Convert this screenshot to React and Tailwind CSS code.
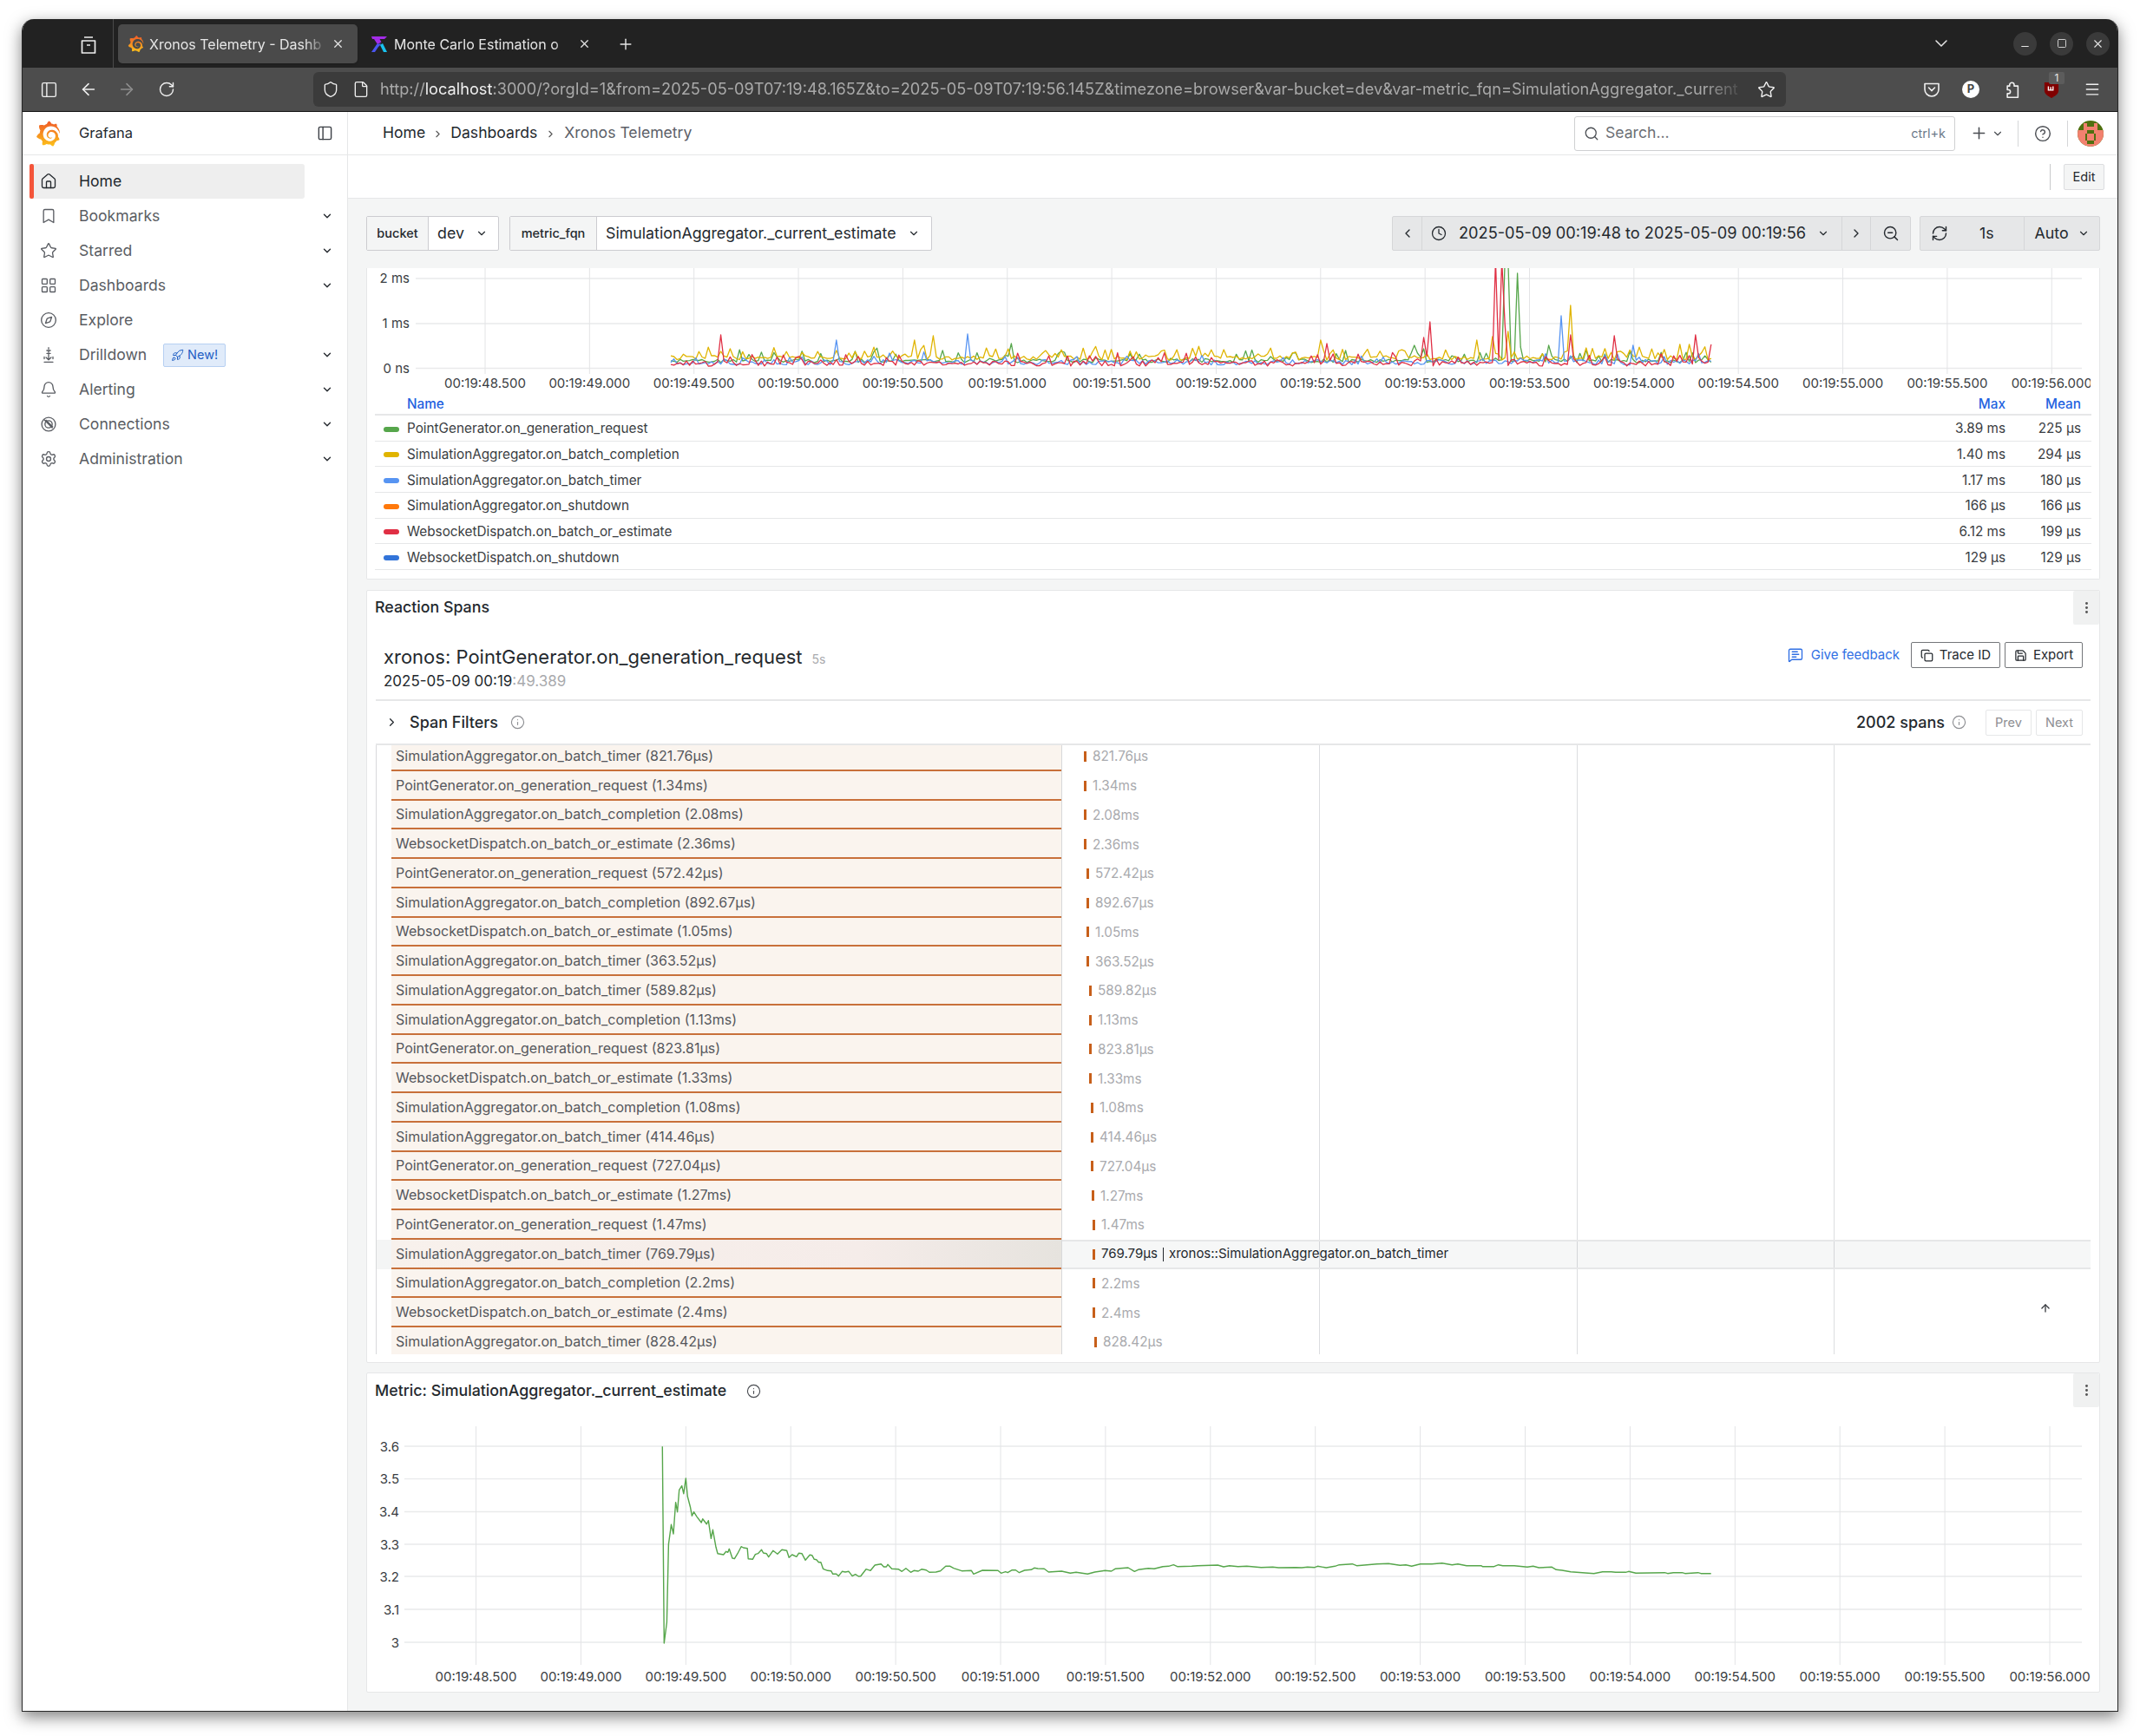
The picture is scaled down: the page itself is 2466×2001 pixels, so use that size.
import React from "react";
import { SiGrafana } from "react-icons/si";
import {
  ArrowLeft, ArrowRight, Bell, Bookmark, ChevronDown, ChevronLeft, ChevronRight, Clock, Compass,
  Copy, File, HelpCircle, Home, Info, LayoutGrid, Menu, MessageSquareText, MoreVertical, PanelLeft,
  Plus, RefreshCw, RotateCw, Rocket, Save, Search, Settings, Shield, Star, X, ZoomOut, ArrowUp,
  Minus, Square,
} from "lucide-react";

const inter = "font-['Inter',sans-serif]";

const navItems = [
  { name: "Bookmarks", icon: Bookmark, arrow: true },
  { name: "Starred", icon: Star, arrow: true },
  { name: "Dashboards", icon: LayoutGrid, arrow: true },
  { name: "Explore", icon: Compass },
  { name: "Drilldown", icon: DrillIcon, arrow: true, badge: true },
  { name: "Alerting", icon: Bell, arrow: true },
  { name: "Connections", icon: LinkIcon, arrow: true },
  { name: "Administration", icon: Settings, arrow: true },
];

const legend = [
  { name: "PointGenerator.on_generation_request", color: "bg-[#56a64b]", max: "3.89 ms", mean: "225 µs" },
  { name: "SimulationAggregator.on_batch_completion", color: "bg-[#e0b400]", max: "1.40 ms", mean: "294 µs" },
  { name: "SimulationAggregator.on_batch_timer", color: "bg-[#5794f2]", max: "1.17 ms", mean: "180 µs" },
  { name: "SimulationAggregator.on_shutdown", color: "bg-[#ff780a]", max: "166 µs", mean: "166 µs" },
  { name: "WebsocketDispatch.on_batch_or_estimate", color: "bg-[#e02f44]", max: "6.12 ms", mean: "199 µs" },
  { name: "WebsocketDispatch.on_shutdown", color: "bg-[#3274d9]", max: "129 µs", mean: "129 µs" },
];

const spans = [
  ["SimulationAggregator.on_batch_timer", "821.76µs", 25],
  ["PointGenerator.on_generation_request", "1.34ms", 25],
  ["SimulationAggregator.on_batch_completion", "2.08ms", 25],
  ["WebsocketDispatch.on_batch_or_estimate", "2.36ms", 25],
  ["PointGenerator.on_generation_request", "572.42µs", 28],
  ["SimulationAggregator.on_batch_completion", "892.67µs", 28],
  ["WebsocketDispatch.on_batch_or_estimate", "1.05ms", 28],
  ["SimulationAggregator.on_batch_timer", "363.52µs", 28],
  ["SimulationAggregator.on_batch_timer", "589.82µs", 31],
  ["SimulationAggregator.on_batch_completion", "1.13ms", 31],
  ["PointGenerator.on_generation_request", "823.81µs", 31],
  ["WebsocketDispatch.on_batch_or_estimate", "1.33ms", 31],
  ["SimulationAggregator.on_batch_completion", "1.08ms", 33],
  ["SimulationAggregator.on_batch_timer", "414.46µs", 33],
  ["PointGenerator.on_generation_request", "727.04µs", 33],
  ["WebsocketDispatch.on_batch_or_estimate", "1.27ms", 34],
  ["PointGenerator.on_generation_request", "1.47ms", 35],
  ["SimulationAggregator.on_batch_timer", "769.79µs", 35],
  ["SimulationAggregator.on_batch_completion", "2.2ms", 35],
  ["WebsocketDispatch.on_batch_or_estimate", "2.4ms", 35],
  ["SimulationAggregator.on_batch_timer", "828.42µs", 37],
];

const timeLabels = ["48.500", "49.000", "49.500", "50.000", "50.500", "51.000", "51.500", "52.000", "52.500", "53.000", "53.500", "54.000", "54.500", "55.000", "55.500", "56.000"];

// green metric line, traced from the screenshot
const curveA = [[712,82],[716,762],[722,690],[726,420],[732,352],[737,384],[742,275],[746,308],[750,232],[756,218],[760,245],[765,192],[769,255],[775,290],[779,322],[783,308],[790,325],[800,345],[803,332],[812,350],[816,338],[822,400],[826,370],[833,430],[837,452],[850,456],[856,445],[860,448],[863,436],[870,468],[875,470],[882,452],[890,428],[895,432],[904,434],[906,470],[916,472],[922,455],[928,452],[936,439],[940,450],[947,452],[952,464],[962,442],[972,454],[982,439],[993,442],[998,466],[1005,456],[1015,463],[1020,451],[1027,452],[1035,475],[1045,457],[1050,458],[1055,472],[1060,473],[1065,482],[1070,482],[1075,505],[1085,511],[1093,512],[1097,523],[1105,523],[1110,530],[1118,514],[1125,516],[1133,514],[1141,530],[1148,524],[1155,531],[1160,530],[1172,506],[1182,511],[1192,492],[1206,488],[1212,498],[1218,498],[1221,490],[1230,505],[1245,506],[1253,514],[1262,503],[1273,517],[1280,511],[1290,513],[1298,506],[1308,509],[1315,517],[1330,516],[1340,512],[1352,496],[1362,496],[1370,503],[1388,512],[1410,511],[1415,523],[1435,510],[1470,511],[1477,520],[1487,515],[1492,518],[1502,509],[1510,509],[1518,518],[1530,510],[1545,508],[1552,502],[1560,504]];
const curveB = [[40,55],[55,66],[100,63],[130,70],[150,67],[190,73],[215,66],[250,61],[272,63],[285,55],[330,51],[352,64],[365,58],[400,53],[420,55],[450,47],[470,46],[487,41],[500,47],[550,46],[570,44],[640,42],[660,48],[680,44],[710,47],[740,46],[790,50],[830,49],[850,51],[910,50],[930,51],[950,49],[975,50],[985,46],[1015,51],[1045,46],[1060,41],[1105,38],[1120,44],[1190,38],[1230,37],[1270,43],[1290,41],[1310,46],[1340,38],[1380,38],[1415,35],[1450,41],[1470,38]];
const curveC = [[0,38],[30,44],[80,44],[85,47],[125,47],[140,41],[155,44],[195,44],[240,49],[260,46],[280,51],[325,49],[340,58],[360,60],[390,65],[410,67],[470,71],[500,65],[530,65],[545,67],[580,67],[590,64],[615,70],[715,68],[725,71],[745,68],[775,68],[785,71],[830,68],[840,71],[875,71]];

const metricPath = [
  ...curveA.map(([x, y]) => [400 + x / 1.96, 1640 + y / 3]),
  ...curveB.map(([x, y]) => [1190 + x / 3, 1790 + y / 3]),
  ...curveC.map(([x, y]) => [1680 + x / 3, 1790 + y / 3]),
].map(([x, y]) => `${x.toFixed(1)},${y.toFixed(1)}`).join(" ");

function rng(seed) {
  let a = seed;
  return () => {
    a = (a + 0x6d2b79f5) | 0;
    let t = Math.imul(a ^ (a >>> 15), 1 | a);
    t = (t + Math.imul(t ^ (t >>> 7), 61 | t)) ^ t;
    return ((t ^ (t >>> 14)) >>> 0) / 4294967296;
  };
}

function series(seed, base, noise, spikeRate, spikeSize, peaks) {
  const r = rng(seed);
  const pts = [];
  for (let x = 773; x <= 1973; x += 3.6) {
    let y = base + (r() - 0.5) * noise;
    if (r() < spikeRate) y -= r() * spikeSize;
    pts.push([x, y]);
  }
  peaks.forEach(([px, py]) => {
    const i = Math.round((px - 773) / 3.6);
    pts[i] = [pts[i][0], py];
  });
  return pts.map(([x, y]) => `${x.toFixed(1)},${y.toFixed(1)}`).join(" ");
}

const traces = [
  { color: "#56a64b", pts: series(11, 416, 4, 0.22, 13, [[1733, 300], [1736, 300], [1750, 315], [1753, 400], [1166, 396], [1784, 398], [1630, 398], [1850, 408]]) },
  { color: "#e0b400", pts: series(22, 412.5, 5, 0.34, 13, [[1074, 387], [1052, 392], [1810, 352], [1718, 388], [1739, 382], [1937, 397], [1945, 397], [1523, 392], [1700, 392]]) },
  { color: "#5794f2", pts: series(33, 417.5, 6, 0.14, 10, [[1114, 385], [1798, 364], [1882, 398], [965, 392]]) },
  { color: "#e02f44", pts: series(44, 419, 6, 0.22, 11, [[832, 386], [1722, 300], [1729, 300], [1735, 374], [1646, 371], [1641, 389], [1810, 386], [1860, 387], [1954, 386], [1973, 397], [1529, 396]]) },
];

function DrillIcon(props) {
  return (
    <svg viewBox="0 0 24 24" fill="none" stroke="currentColor" strokeWidth="1.6" strokeLinecap="round" {...props}>
      <path d="M12 2v2M12 6.5v2M9.5 6h5M9.5 10h5M12 11v8M12 19l-3.5-3.5M12 19l3.5-3.5M6 15v2.5M18 15v2.5M6 22h12" />
    </svg>
  );
}

function LinkIcon(props) {
  return (
    <svg viewBox="0 0 24 24" fill="none" stroke="currentColor" strokeWidth="1.6" {...props}>
      <circle cx="12" cy="12" r="9.5" />
      <circle cx="12" cy="12" r="5" />
      <path d="M5.5 5.5 17.5 17.5M8 6l10 10" />
    </svg>
  );
}

function GrafanaLogo({ className }) {
  return <SiGrafana className={className} fill="url(#grafana-grad)" />;
}

function XronosLogo() {
  return (
    <svg viewBox="0 0 20 20" className="w-[20px] h-[20px] shrink-0">
      <path d="M1 1h18l-3 3H10.5l2 3.5L8 10 4 4H2z" fill="#a32ce8" />
      <path d="M7.5 9.5h5L9 13l-4 6H1z" fill="#4a55f0" />
      <path d="M11 11l3-2 5 10h-4z" fill="#18c3f0" />
    </svg>
  );
}

function Avatar() {
  const cells = [[1,0],[4,0],[1,1],[2,1],[3,1],[4,1],[1,2],[4,2],[2,3],[3,3],[0,4],[2,4],[3,4],[5,4],[0,5],[1,5],[4,5],[5,5],[2,6],[3,6],[1,6],[4,6]];
  return (
    <svg viewBox="0 0 30 30" className="w-[30px] h-[30px] rounded-full bg-[#4f6f0f] shrink-0">
      <rect x="0" y="11" width="30" height="12" fill="#f2816f" />
      <rect x="9" y="11" width="12" height="12" fill="#4f6f0f" />
      {cells.map(([c, r]) => (
        <rect key={`${c}-${r}`} x={3 + c * 4} y={3 + r * 4} width="4" height="4" fill="#f2816f" />
      ))}
    </svg>
  );
}

function BrowserChrome() {
  return (
    <div className="shrink-0">
      <div className="h-[56px] bg-[#222222] flex items-end pl-[105px] text-[#e6e6e6]">
        <div className="h-full w-[1px] bg-[#4a4a4a] -ml-px mr-[5px] self-stretch" />
        <div className="absolute left-[66px] top-[19px]">
          <svg viewBox="0 0 20 22" fill="none" stroke="#eee" strokeWidth="1.7" className="w-[20px] h-[22px]">
            <path d="M5 2h10M2.5 6h15v14h-15z" strokeLinejoin="round" />
            <path d="M8 11h4" />
          </svg>
        </div>
        <div className="w-[276px] h-[45px] bg-[#4a4a4a] rounded-[5px] flex items-center pl-[11px] pr-[15px] gap-[6px] mb-[5px] shadow-sm">
          <GrafanaLogo className="w-[19px] h-[19px] shrink-0" />
          <span className="flex-1 text-[16px] whitespace-nowrap [mask-image:linear-gradient(to_right,black_88%,transparent)]">Xronos Telemetry - Dashb</span>
          <X size={15} strokeWidth={2} className="shrink-0" />
        </div>
        <div className="w-[275px] h-[45px] mb-[5px] flex items-center pl-[15px] gap-[7px]">
          <XronosLogo />
          <span className="w-[205px] text-[16px] whitespace-nowrap [mask-image:linear-gradient(to_right,black_90%,transparent)]">Monte Carlo Estimation o</span>
          <X size={15} strokeWidth={2} className="shrink-0" />
        </div>
        <div className="h-[45px] mb-[5px] flex items-center ml-[24px]">
          <Plus size={20} strokeWidth={1.7} />
        </div>
        <div className="flex-1 h-full flex items-center justify-end pr-[9px] gap-[15px]">
          <ChevronDown size={24} strokeWidth={1.5} className="mr-[56px]" />
          <div className="w-[27px] h-[27px] rounded-full bg-[#3a3a3a] flex items-center justify-center"><Minus size={13} strokeWidth={2} className="mt-[6px]" /></div>
          <div className="w-[27px] h-[27px] rounded-full bg-[#3a3a3a] flex items-center justify-center"><Square size={12} strokeWidth={1.7} /></div>
          <div className="w-[27px] h-[27px] rounded-full bg-[#3a3a3a] flex items-center justify-center"><X size={15} strokeWidth={1.7} /></div>
        </div>
      </div>
      <div className="h-[51px] bg-[#4d4d4d] border-b border-[#111] flex items-center text-[#f0f0f0] pl-[20px]">
        <PanelLeft size={21} strokeWidth={1.6} className="shrink-0" />
        <ArrowLeft size={22} strokeWidth={1.7} className="ml-[24px] shrink-0" />
        <ArrowRight size={22} strokeWidth={1.7} className="ml-[22px] text-[#8e8e8e] shrink-0" />
        <RotateCw size={20} strokeWidth={1.7} className="ml-[25px] shrink-0" />
        <div className="ml-[159px] w-[1697px] shrink-0 h-[40px] bg-[#3b3b3b] rounded-[6px] flex items-center pl-[10px] pr-[12px]">
          <Shield size={20} strokeWidth={1.6} className="shrink-0" />
          <File size={20} strokeWidth={1.6} className="shrink-0 ml-[15px]" />
          <div className={`ml-[12px] flex-1 text-[18.2px] text-[#a9a9a9] whitespace-nowrap ${inter} [mask-image:linear-gradient(to_right,black_97%,transparent)]`}>
            http://<span className="text-[#f0f0f0]">localhost</span>:3000/?orgId=1&amp;from=2025-05-09T07:19:48.165Z&amp;to=2025-05-09T07:19:56.145Z&amp;timezone=browser&amp;var-bucket=dev&amp;var-metric_fqn=SimulationAggregator._current
          </div>
          <Star size={21} strokeWidth={1.6} className="shrink-0 ml-[14px]" />
        </div>
        <svg viewBox="0 0 20 20" fill="none" stroke="#f0f0f0" strokeWidth="1.6" className="w-[20px] h-[20px] ml-[158px] shrink-0">
          <path d="M2 3.5h16v6.5a8 8 0 0 1-16 0z" strokeLinejoin="round" />
          <path d="M6.5 8l3.5 3.5L13.5 8" strokeLinecap="round" />
        </svg>
        <div className="ml-[25px] w-[20px] h-[20px] rounded-full bg-white text-[#444] text-[13px] font-bold flex items-center justify-center shrink-0">P</div>
        <svg viewBox="0 0 24 24" fill="none" stroke="#f0f0f0" strokeWidth="1.8" strokeLinejoin="round" className="w-[21px] h-[21px] ml-[26px] shrink-0">
          <path d="M10 7V5.5a3 3 0 0 1 6 0V7h5v15H7v-5h1.5a2.5 2.5 0 0 0 0-5H7V7z" />
        </svg>
        <div className="relative ml-[27px] shrink-0">
          <svg viewBox="0 0 20 22" className="w-[18px] h-[22px] block">
            <path d="M1 2h18v11c0 4-5 7-9 9-4-2-9-5-9-9z" fill="#800000" />
            <path d="M6 7v5h3V8m0 4h3V7" stroke="#fff" strokeWidth="1.5" fill="none" />
          </svg>
          <div className="absolute -top-[9px] left-[6px] w-[18px] h-[14px] bg-[#5c5c5c] rounded-[2px] text-[12px] leading-[14px] text-center text-[#e6e6e6]">1</div>
        </div>
        <Menu size={20} strokeWidth={1.7} className="ml-[28px] shrink-0" />
      </div>
    </div>
  );
}

function Sidebar() {
  return (
    <aside className="w-[375px] shrink-0 border-r border-[#e6e7e8] bg-white flex flex-col">
      <div className="h-[50px] border-b border-[#e6e7e8] flex items-center pl-[15px] pr-[16px]">
        <GrafanaLogo className="w-[29px] h-[30px]" />
        <span className="ml-[21px] flex-1 text-[16.5px] text-[#24292e]">Grafana</span>
        <PanelLeft size={19} strokeWidth={1.8} className="text-[#3c4046]" />
      </div>
      <nav className="pt-[10px] text-[17.6px] text-[#5a5d63]">
        <div className="h-[40px] ml-[8px] w-[317px] flex items-center bg-[#eeeeee] rounded-[3px] relative text-[#24292e]">
          <div className="absolute left-0 top-0 bottom-0 w-[5px] rounded-[2px] bg-[#f4553a]" />
          <Home size={20} strokeWidth={1.6} className="ml-[12px]" />
          <span className="ml-[25px]">Home</span>
        </div>
        {navItems.map((item) => (
          <div key={item.name} className="h-[40px] ml-[8px] flex items-center pr-[16px]">
            <item.icon width={20} height={20} strokeWidth={1.6} className="ml-[12px] shrink-0" />
            <span className="ml-[25px]">{item.name}</span>
            {item.badge && (
              <span className="ml-[19px] h-[27px] w-[72px] rounded-[2px] bg-[#e0ebfa] border border-[#b6d0f2] text-[#1f5fc4] text-[14.5px] flex items-center justify-center gap-[4px]">
                <Rocket size={15} strokeWidth={1.6} />New!
              </span>
            )}
            {item.arrow && <ChevronDown size={14} strokeWidth={2.4} className="ml-auto text-[#24292e]" />}
          </div>
        ))}
      </nav>
    </aside>
  );
}

function TopBar() {
  return (
    <>
      <div className="h-[50px] shrink-0 border-b border-[#e6e7e8] bg-white flex items-center pl-[40px] pr-[16px] text-[17.6px]">
        <span className="text-[#24292e]">Home</span>
        <ChevronRight size={13} className="mx-[8px] text-[#555] mt-[2px]" />
        <span className="text-[#24292e]">Dashboards</span>
        <ChevronRight size={13} className="mx-[9px] text-[#555] mt-[2px]" />
        <span className="text-[#5c6068]">Xronos Telemetry</span>
        <div className="ml-auto w-[439px] h-[40px] border border-[#cfd0d2] rounded-[3px] flex items-center pl-[10px] pr-[10px]">
          <Search size={18} strokeWidth={1.7} className="text-[#4a4d52]" />
          <span className="ml-[7px] text-[#6c6f75]">Search...</span>
          <span className="ml-auto text-[14.5px] text-[#6c7a8a]">ctrl+k</span>
        </div>
        <Plus size={21} strokeWidth={1.8} className="ml-[17px] text-[#4a4d52]" />
        <ChevronDown size={14} strokeWidth={2} className="ml-[4px] text-[#4a4d52]" />
        <div className="w-px h-[30px] bg-[#d5d6d8] ml-[16px]" />
        <HelpCircle size={20} strokeWidth={1.7} className="ml-[18px] text-[#4a4d52]" />
        <div className="w-px h-[30px] bg-[#d5d6d8] ml-[18px]" />
        <div className="ml-[11px]"><Avatar /></div>
      </div>
      <div className="h-[50px] shrink-0 border-b border-[#e6e7e8] bg-white flex items-center justify-end pr-[15px]">
        <div className="w-px h-[30px] bg-[#c8c9cb] mr-[15px]" />
        <div className="h-[30px] w-[47px] bg-[#f4f5f5] border border-[#dcdde0] rounded-[2px] text-[14.5px] text-[#24292e] flex items-center justify-center">Edit</div>
      </div>
    </>
  );
}

function VarRow() {
  const seg = "h-[40px] bg-[#e6e7e8] border border-[#d5d6d8] flex items-center justify-center text-[#24292e]";
  return (
    <div className="h-[40px] flex items-center text-[17.8px] text-[#24292e]">
      <div className="h-[40px] w-[153px] flex border border-[#ccccd0] rounded-[2px] bg-white">
        <span className="w-[71px] bg-[#f4f5f5] border-r border-[#ccccd0] text-[14.5px] font-medium flex items-center justify-center">bucket</span>
        <span className="pl-[10px] leading-[38px]">dev</span>
        <ChevronDown size={14} strokeWidth={2} className="ml-[13px] mt-[12px]" />
      </div>
      <div className="ml-[12px] h-[40px] w-[487px] flex border border-[#ccccd0] rounded-[2px] bg-white">
        <span className="w-[100px] bg-[#f4f5f5] border-r border-[#ccccd0] text-[14.5px] font-medium flex items-center justify-center">metric_fqn</span>
        <span className="pl-[10px] leading-[38px]">SimulationAggregator._current_estimate</span>
        <ChevronDown size={14} strokeWidth={2} className="ml-[13px] mt-[12px]" />
      </div>
      <div className="ml-auto flex">
        <div className={`${seg} w-[35px] rounded-l-[2px]`}><ChevronLeft size={16} strokeWidth={2} /></div>
        <div className={`${seg} w-[485px] -ml-px justify-start pl-[10px]`}>
          <Clock size={18} strokeWidth={1.7} />
          <span className="ml-[14px] whitespace-nowrap text-[18.2px]">2025-05-09 00:19:48 to 2025-05-09 00:19:56</span>
          <ChevronDown size={14} strokeWidth={2} className="ml-auto mr-[14px]" />
        </div>
        <div className={`${seg} w-[34px] -ml-px`}><ChevronRight size={16} strokeWidth={2} /></div>
        <div className={`${seg} w-[47px] -ml-px rounded-r-[2px]`}><ZoomOut size={20} strokeWidth={1.7} /></div>
        <div className={`${seg} w-[121px] ml-[10px] rounded-l-[2px] justify-start pl-[12px]`}>
          <RefreshCw size={20} strokeWidth={1.7} />
          <span className="ml-[36px]">1s</span>
        </div>
        <div className={`${seg} w-[88px] -ml-px rounded-r-[2px]`}>
          Auto<ChevronDown size={14} strokeWidth={2} className="ml-[10px]" />
        </div>
      </div>
    </div>
  );
}

function Telemetry() {
  const grid = timeLabels.map((_, i) => 559 + i * 120.35);
  return (
    <section className="h-[359px] bg-white border-x border-b border-[#e6e7e8] rounded-b-[2px]">
      <svg viewBox="423 309 1996 147" className={`block w-[1996px] h-[147px] ${inter}`}>
        <defs>
          <clipPath id="top-clip"><rect x="423" y="309" width="1986" height="147" /></clipPath>
        </defs>
        {[321, 373, 424.5].map((y) => <line key={y} x1="479" x2="2399" y1={y} y2={y} stroke="#e9eaeb" strokeWidth="1.3" />)}
        {grid.map((x) => <line key={x} x1={x} x2={x} y1="309" y2="431" stroke="#e3e4e6" />)}
        {[["2 ms", 325.5], ["1 ms", 378], ["0 ns", 429.5]].map(([t, y]) => (
          <text key={t} x="472" y={y} textAnchor="end" fontSize="15" fill="#3a3d42">{t}</text>
        ))}
        <g clipPath="url(#top-clip)">
          {timeLabels.map((t, i) => (
            <text key={t} x={grid[i]} y="447" textAnchor="middle" fontSize="15" fill="#3a3d42">00:19:{t}</text>
          ))}
          {traces.map((s) => <polyline key={s.color} points={s.pts} fill="none" stroke={s.color} strokeWidth="1.3" strokeLinejoin="round" />)}
        </g>
      </svg>
      <div className="mx-[9px] text-[15.3px] text-[#3a3d42]">
        <div className="h-[23px] flex items-center border-b-2 border-[#e6e7e8] text-[#1f62e0] font-medium">
          <span className="ml-[37px]">Name</span>
          <span className="ml-auto w-[60px] text-right mr-[27px]">Max</span>
          <span className="w-[60px] text-right mr-[12px]">Mean</span>
        </div>
        {legend.map((row) => (
          <div key={row.name} className="h-[29.67px] pt-[3px] flex items-center border-b border-[#e6e7e8]">
            <span className={`ml-[10px] w-[18px] h-[6px] rounded-[3px] ${row.color}`} />
            <span className="ml-[9px]">{row.name}</span>
            <span className="ml-auto w-[90px] text-right mr-[27px]">{row.max}</span>
            <span className="w-[60px] text-right mr-[12px]">{row.mean}</span>
          </div>
        ))}
      </div>
    </section>
  );
}

function SpanRow({ row, active }) {
  const [name, dur, left] = row;
  return (
    <div className="h-[33.75px] flex relative">
      <div className={`w-[17px] shrink-0 ${active ? "bg-[#f4f5f5]" : ""}`} />
      <div className={`w-[772px] shrink-0 flex items-center pl-[5px] border-b-2 border-[#c8703a] text-[#55575c] ${active ? "bg-[linear-gradient(to_right,#f8f1ec_0%,#f5ece9_70%,#e6e3de_100%)]" : "bg-[#faf4ee]"}`}>
        {name} ({dur})
      </div>
      <div className="w-px bg-[#d8d9db] shrink-0" />
      <div className={`flex items-center flex-1 text-[15.3px] ${active ? "bg-[#24292e]/[0.04] border-y-2 border-[#e6e7e8]" : ""}`}>
        <span className="w-[3px] h-[12px] bg-[#c75f1a] shrink-0" style={{ marginLeft: left }} />
        {active ? (
          <span className="ml-[7px] text-[15px] text-[#24292e] whitespace-nowrap">
            {dur}<span className="mx-[6px] border-l border-[#24292e] inline-block h-[16px] align-middle" />xronos::{name}
          </span>
        ) : (
          <span className="ml-[7px] text-[#a9aaae] mt-[2px]">{dur}</span>
        )}
      </div>
    </div>
  );
}

function SpansPanel() {
  return (
    <section className="h-[891px] mt-[12px] bg-white border border-[#e6e7e8] rounded-[2px] relative">
      <div className="absolute right-0 top-0 w-[30px] h-[39px] bg-[#f0f1f1] rounded-[2px] flex items-center justify-center text-[#555]">
        <MoreVertical size={17} strokeWidth={2.2} />
      </div>
      <h2 className="h-[39px] pl-[9px] flex items-center text-[17.8px] font-medium text-[#24292e]">Reaction Spans</h2>
      <div className="mx-[10px]">
        <div className="h-[88px] border-b-2 border-[#e6e7e8] flex pl-[9px] pr-[9px] pt-[23px]">
          <div>
            <div className="h-[28px] flex items-baseline text-[22px] text-[#24292e] leading-[28px]">
              xronos: PointGenerator.on_generation_request
              <span className="ml-[11px] text-[14px] text-[#a9aaad]">5s</span>
            </div>
            <div className="text-[17px] text-[#24292e] leading-[28px]">2025-05-09 00:19<span className="text-[#a9aaad]">:49.389</span></div>
          </div>
          <div className="ml-auto flex items-start text-[15px] text-[#24292e]">
            <div className="h-[30px] -mt-[3px] flex items-center text-[#2f6fe4] mr-[13px]">
              <MessageSquareText size={18} strokeWidth={1.8} />
              <span className="ml-[9px]">Give feedback</span>
            </div>
            <div className="h-[30px] w-[103px] -mt-[3px] border border-[#74767a] rounded-[2px] flex items-center justify-center gap-[7px]">
              <Copy size={15} strokeWidth={2} />Trace ID
            </div>
            <div className="h-[30px] w-[90px] -mt-[3px] ml-[5px] border border-[#74767a] rounded-[2px] flex items-center justify-center gap-[7px]">
              <Save size={15} strokeWidth={2} />Export
            </div>
          </div>
        </div>
        <div className="h-[51px] border-b-2 border-[#e6e7e8] flex items-center pr-[9px] text-[18px] font-medium text-[#24292e]">
          <ChevronRight size={15} strokeWidth={2} className="ml-[11px]" />
          <span className="ml-[13px]">Span Filters</span>
          <Info size={17} strokeWidth={1.6} className="ml-[14px] text-[#8d8e92]" />
          <span className="ml-auto">2002 spans</span>
          <Info size={17} strokeWidth={1.6} className="ml-[8px] text-[#8d8e92]" />
          <div className="ml-[22px] w-[53px] h-[30px] border border-[#e6e7e8] rounded-[2px] text-[14.5px] font-normal text-[#8d8e92] flex items-center justify-center">Prev</div>
          <div className="ml-[5px] w-[54px] h-[30px] border border-[#e6e7e8] rounded-[2px] text-[14.5px] font-normal text-[#8d8e92] flex items-center justify-center">Next</div>
        </div>
        <div className="h-[702px] relative overflow-hidden border-l border-[#d8d9db] text-[16px]">
          <div className="absolute left-[790px] right-0 top-0 bottom-0 grid grid-cols-4">
            <div />
            <div className="border-l border-[#dcdde0]" />
            <div className="border-l border-[#dcdde0]" />
            <div className="border-l border-[#dcdde0]" />
          </div>
          <div className="relative -mt-[4px]">
            {spans.map((row, i) => <SpanRow key={i} row={row} active={i === 17} />)}
          </div>
          <ArrowUp size={14} strokeWidth={2.2} className="absolute right-[45px] top-[642px] text-[#33363b]" />
        </div>
      </div>
    </section>
  );
}

function MetricPanel() {
  const grid = timeLabels.map((_, i) => 548.5 + i * 120.9);
  const ys = [["3.6", 1667], ["3.5", 1704.7], ["3.4", 1742.5], ["3.3", 1780], ["3.2", 1817], ["3.1", 1855], ["3", 1893]];
  return (
    <section className="h-[369px] mt-[11px] bg-white border border-[#e6e7e8] rounded-[2px] relative">
      <div className="absolute right-0 top-0 w-[30px] h-[39px] bg-[#f0f1f1] rounded-[2px] flex items-center justify-center text-[#555]">
        <MoreVertical size={17} strokeWidth={2.2} />
      </div>
      <h2 className="h-[40px] pl-[9px] flex items-center text-[17.8px] font-medium text-[#24292e]">
        Metric: SimulationAggregator._current_estimate
        <Info size={17} strokeWidth={1.6} className="ml-[23px] text-[#4a4d52]" />
      </h2>
      <svg viewBox="423 1623 1996 327" className={`block w-[1996px] h-[327px] ${inter}`}>
        <defs>
          <clipPath id="bottom-clip"><rect x="423" y="1623" width="1986" height="327" /></clipPath>
        </defs>
        {ys.map(([t, y]) => (
          <g key={t}>
            <line x1="466" x2="2399" y1={y} y2={y} stroke="#e9eaeb" strokeWidth="1.3" />
            <text x="460" y={y + 5.5} textAnchor="end" fontSize="15" fill="#3a3d42">{t}</text>
          </g>
        ))}
        {grid.map((x) => <line key={x} x1={x} x2={x} y1="1644" y2="1919" stroke="#e3e4e6" />)}
        <g clipPath="url(#bottom-clip)">
          {timeLabels.map((t, i) => (
            <text key={t} x={grid[i]} y="1938" textAnchor="middle" fontSize="15" fill="#3a3d42">00:19:{t}</text>
          ))}
        </g>
        <polyline points={metricPath} fill="none" stroke="#56a64b" strokeWidth="1.4" strokeLinejoin="round" />
      </svg>
    </section>
  );
}

export default function App() {
  return (
    <div className={`w-[2466px] h-[2001px] bg-white pl-[25px] pt-[22px] overflow-hidden ${inter}`}>
      <svg className="absolute w-0 h-0">
        <defs>
          <linearGradient id="grafana-grad" x1="0" y1="1" x2="0" y2="0">
            <stop offset="0" stopColor="#fcc11a" />
            <stop offset="1" stopColor="#f05a28" />
          </linearGradient>
        </defs>
      </svg>
      <div className="w-[2416px] h-[1951px] relative flex flex-col rounded-t-[14px] overflow-hidden border-x border-b border-[#262626] shadow-[0_6px_18px_rgba(0,0,0,0.5)]">
        <BrowserChrome />
        <div className="flex flex-1 min-h-0">
          <Sidebar />
          <main className="flex-1 min-w-0 flex flex-col bg-[#f4f5f5]">
            <TopBar />
            <div className="flex-1 pl-[21px] pr-[20px] pt-[20px]">
              <VarRow />
              <div className="h-[20px]" />
              <Telemetry />
              <SpansPanel />
              <MetricPanel />
            </div>
          </main>
        </div>
      </div>
    </div>
  );
}
